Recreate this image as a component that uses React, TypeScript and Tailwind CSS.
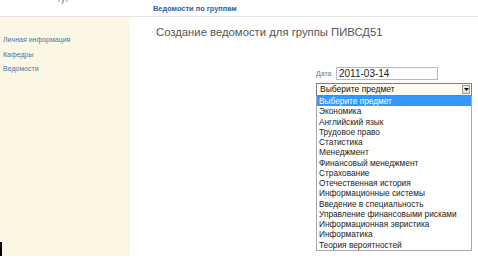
import React from 'react'

const subjects = [
  'Выберите предмет',
  'Экономика',
  'Английский язык',
  'Трудовое право',
  'Статистика',
  'Менеджмент',
  'Финансовый менеджмент',
  'Страхование',
  'Отечественная история',
  'Информационные системы',
  'Введение в специальность',
  'Управление финансовыми рисками',
  'Информационная эвристика',
  'Информатика',
  'Теория вероятностей',
]

const sideLinks = ['Личная информация', 'Кафедры', 'Ведомости']

export default function App() {
  return (
    <div className="relative w-[478px] h-[260px] overflow-hidden bg-white font-['Liberation_Sans',Arial,sans-serif]">
      {/* header strip */}
      <div className="flex h-[17px] border-b border-[#e4e4e4]">
        <div className="w-[130px] pl-[58px]">
          <p className="-mt-[4px] text-[7px] font-bold text-[#8a97ad] leading-[8px]">гут</p>
        </div>
        <div className="pl-[23px] pt-[4px]">
          <p className="text-[7.4px] font-bold leading-[9px] text-[#2f5f9e]">Ведомости по группам</p>
        </div>
      </div>

      <div className="flex">
        {/* sidebar */}
        <div className="w-[130px] h-[239px] bg-[#fcf6e4] pt-[16px] pl-[3px]">
          {sideLinks.map((l) => (
            <p key={l} className="text-[7px] leading-[14.5px] text-[#4f73a8]">{l}</p>
          ))}
        </div>

        {/* main */}
        <div className="flex-1 pl-[26px] pt-[8px]">
          <h1 className="text-[11.3px] leading-[15px] text-[#555555]">Создание ведомости для группы ПИВСД51</h1>

          <div className="ml-[160px] mt-[27px] w-[156px]">
            <div className="flex items-center">
              <span className="w-[20px] text-[7px] leading-[9px] text-[#777777]">Дата</span>
              <div className="w-[102px] h-[13px] border border-[#b9b9b9] pl-[2px] text-[10px] leading-[11px] text-[#222222]">
                2011-03-14
              </div>
            </div>

            <div className="mt-[3px] flex h-[13px] items-center border border-[#7f7f7f] bg-[#fffdf2] pl-[3px]">
              <span className="flex-1 text-[8.5px] leading-[11px] text-[#111111]">Выберите предмет</span>
              <span className="mr-[1px] flex h-[9px] w-[8px] items-center justify-center border border-[#9a9a9a] bg-[#e9e9e9]">
                <svg width="5" height="3" viewBox="0 0 5 3">
                  <path d="M0 0h5L2.5 3z" fill="#000" />
                </svg>
              </span>
            </div>

            <div className="border border-[#a8a8a8] border-t-0 bg-white">
              {subjects.map((s, i) => (
                <div
                  key={s}
                  className={
                    i === 0
                      ? 'h-[10.25px] bg-[#3399ff] pl-[2px] text-[8.3px] leading-[10.25px] text-white'
                      : 'h-[10.25px] pl-[2px] text-[8.3px] leading-[10.25px] text-[#222222]'
                  }
                >
                  {s}
                </div>
              ))}
            </div>
          </div>
        </div>
      </div>

      <div className="absolute left-0 top-[242px] h-[14px] w-[2px] bg-black" />
    </div>
  )
}
